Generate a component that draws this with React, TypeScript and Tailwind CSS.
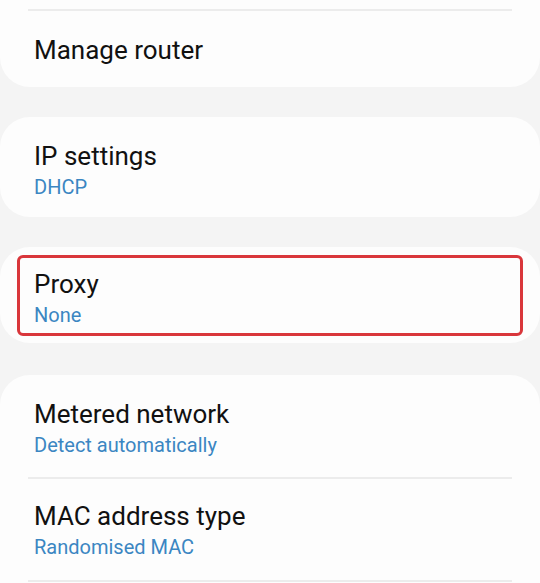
import React from "react";

function Title({ children }: { children: React.ReactNode }) {
  return <div className="text-[26px] leading-[30px] text-[#111111]">{children}</div>;
}

function Sub({ children }: { children: React.ReactNode }) {
  return <div className="mt-[4px] text-[20px] leading-[24px] text-[#3b86c2]">{children}</div>;
}

function Divider() {
  return <div className="mx-[28px] h-[2px] bg-[#ececec]" />;
}

export default function App() {
  return (
    <div
      className="h-[583px] w-[540px] overflow-hidden bg-[#f4f4f4]"
      style={{ fontFamily: "Roboto, 'Noto Sans', sans-serif" }}
    >
      {/* Card 1 (top cut off) */}
      <div className="rounded-b-[30px] bg-[#fdfdfd] pt-[9px]">
        <Divider />
        <div className="px-[34px] pb-[22px] pt-[24px]">
          <Title>Manage router</Title>
        </div>
      </div>

      {/* Card 2 */}
      <div className="mt-[30px] rounded-[30px] bg-[#fdfdfd] px-[34px] pb-[18px] pt-[24px]">
        <Title>IP settings</Title>
        <Sub>DHCP</Sub>
      </div>

      {/* Card 3 with highlighted row */}
      <div className="mt-[30px] rounded-[30px] bg-[#fdfdfd] px-[17px] pb-[7px] pt-[8px]">
        <div className="rounded-[6px] border-[3px] border-[#d9363b] pb-[6px] pl-[14px] pt-[11px]">
          <Title>Proxy</Title>
          <Sub>None</Sub>
        </div>
      </div>

      {/* Card 4 */}
      <div className="mt-[32px] rounded-t-[30px] bg-[#fdfdfd]">
        <div className="px-[34px] pb-[20px] pt-[24px]">
          <Title>Metered network</Title>
          <Sub>Detect automatically</Sub>
        </div>
        <Divider />
        <div className="px-[34px] pb-[21px] pt-[22px]">
          <Title>MAC address type</Title>
          <Sub>Randomised MAC</Sub>
        </div>
        <Divider />
        <div className="h-[80px]" />
      </div>
    </div>
  );
}
